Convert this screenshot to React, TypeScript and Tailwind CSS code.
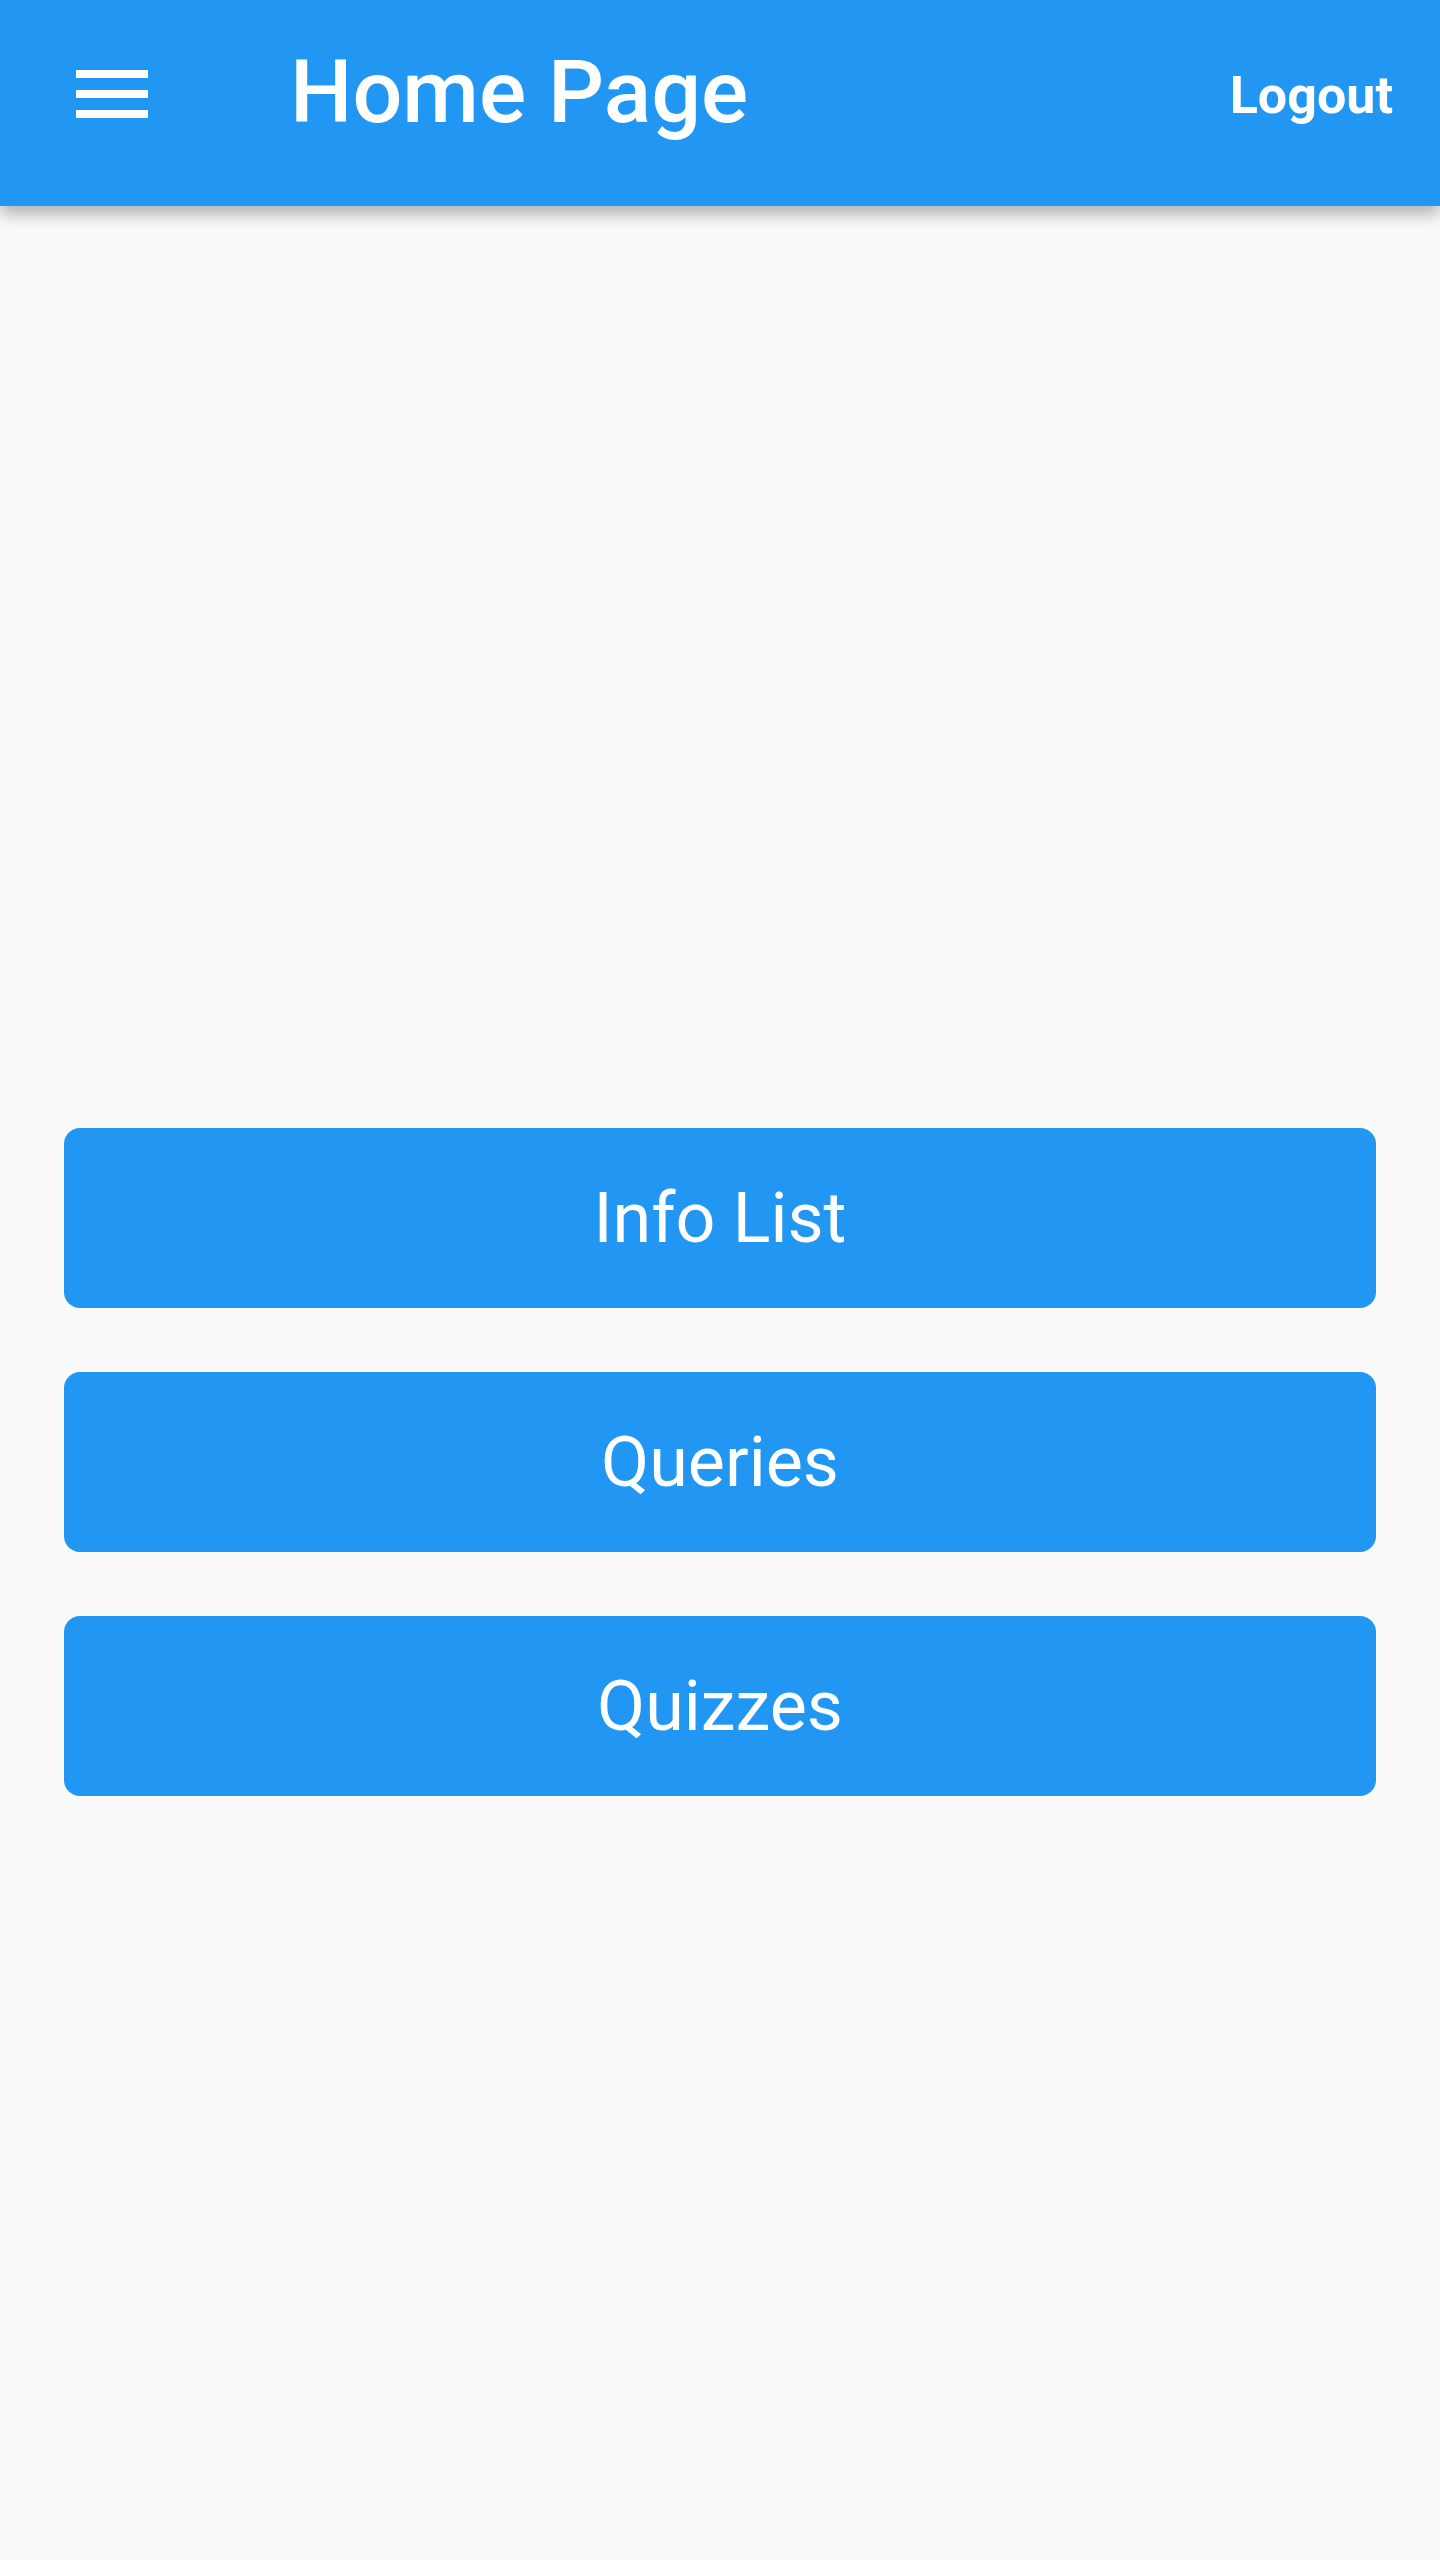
import React from "react";

export default function App() {
  const items = ["Info List", "Queries", "Quizzes"];
  return (
    <div className="min-h-[2560px] w-[1440px] bg-[#fafafa]" style={{ fontFamily: "Roboto, 'Noto Sans', sans-serif" }}>
      <header className="relative z-10 flex h-[206px] items-start bg-[#2196f3] shadow-[0_8px_16px_rgba(0,0,0,0.3)]">
        <div className="ml-[76px] mt-[70px] h-[48px] w-[72px]">
          <svg width="72" height="48" viewBox="0 0 72 48" fill="white">
            <rect x="0" y="0" width="72" height="8" />
            <rect x="0" y="20" width="72" height="8" />
            <rect x="0" y="40" width="72" height="8" />
          </svg>
        </div>
        <h1 className="ml-[142px] mt-[40px] text-[88px] font-medium leading-[103px] text-white">Home Page</h1>
        <button className="ml-auto mr-[47px] mt-[65px] text-[52px] font-bold leading-[61px] text-white">Logout</button>
      </header>
      <main className="flex flex-col gap-[64px] px-[64px] pt-[922px]">
        {items.map((t) => (
          <button
            key={t}
            className="flex h-[180px] w-full items-center justify-center rounded-[16px] bg-[#2196f3] text-[70px] font-normal text-white"
          >
            {t}
          </button>
        ))}
      </main>
    </div>
  );
}
